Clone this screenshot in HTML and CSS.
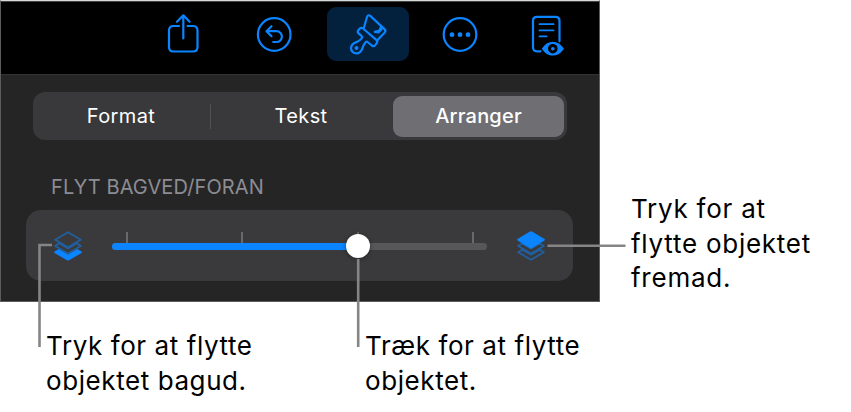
FILE: index.html
```
<!DOCTYPE html>
<html lang="da">
<head>
  <meta charset="UTF-8" />
  <meta name="viewport" content="width=device-width, initial-scale=1.0" />
  <title>Arranger</title>
  <link rel="stylesheet" href="styles.css">
</head>
<body>
  <div class="figure">
    <div class="main">
      <div class="panel">
        <div class="toolbar">
          <div class="tool">
            <svg class="icon" viewBox="143 7 82 54">
              <path d="M179 26h-5.500q-4.500 0-4.500 4.500v16.500q0 4.500 4.500 4.500h19.500q4.500 0 4.500-4.500v-16.500q0-4.500-4.500-4.500h-5.500M183.300 38.500v-23M177 21.800l6.300-6.500 6.300 6.500" />
            </svg>
          </div>
          <div class="tool">
            <svg class="icon" viewBox="235 7 82 54">
              <circle cx="274.200" cy="34.500" r="16.300" />
              <path d="M271.500 26.200l-5 5 5 5M267 31.200h9.500a5.400 5.400 0 0 1 0 10.800h-3.300" />
            </svg>
          </div>
          <div class="tool active">
            <svg class="icon" viewBox="327 7 82 54">
              <path d="M358.300 30.200l1.300-1.500q1.600-1.700 3.400-.2l13.300 11.400q1.800 1.600.4 3.300l-1.400 1.900q-1.500 1.900-3.500.4l-4.300-3.500q-1.300-.8-2.300.7-1.700 2.400-2.800 5.600c-1.100 3.200-3.300 5-6 5-3.200 0-5.500-2.300-5.300-5.300.1-3 2-4.800 5.300-5.900 2.700-.9 4-2.100 5.300-3.700q1-1.300-.3-2.500l-2.800-2.500q-1.600-1.500-.3-3.200z" />
              <path d="M363.700 28.300l3.400-11.500q1-2.600 3.200-.9l14.200 13.200q1.700 1.700.3 3.300l-7.700 8.200M381 26.800l-1.600 3.800-4.600 1.300 4 .4 2.800-3z" />
              <circle class="solid" cx="356.500" cy="48" r="2" />
            </svg>
          </div>
          <div class="tool">
            <svg class="icon" viewBox="419 7 82 54">
              <circle cx="460" cy="34.500" r="16.300" />
              <circle class="solid" cx="452" cy="34.700" r="2.400" />
              <circle class="solid" cx="460" cy="34.700" r="2.400" />
              <circle class="solid" cx="468" cy="34.700" r="2.400" />
            </svg>
          </div>
          <div class="tool">
            <svg class="icon" viewBox="511 7 82 54">
              <path d="M540.500 51.300h-3.500q-4 0-4-4v-26.500q0-4 4-4h18.500q4 0 4 4v20.500" />
              <path class="thin" d="M539.500 24.200h14M539.500 30.400h14M539.500 36.400h7" />
              <path class="solid" d="M541.800 48.700c5.800-9.200 16.200-9.200 22.200 0-6 9.200-16.400 9.200-22.200 0z" />
              <circle class="hole" cx="552.800" cy="48.700" r="4.800" />
              <circle class="solid" cx="552.800" cy="48.700" r="1.800" />
            </svg>
          </div>
        </div>

        <div class="content">
          <div class="tabs">
            <div class="tab">Format</div>
            <div class="divider"></div>
            <div class="tab tab-text">Tekst</div>
            <div class="tab selected">Arranger</div>
          </div>
          <div class="label">FLYT BAGVED/FORAN</div>
          <div class="card">
            <svg class="layers" viewBox="0 0 28 30">
              <path class="front" d="M.5 20.500L5 18l9 5.500 9-5.500 4.500 2.500q.8.700 0 1.500L15 29.200q-1 .6-2 0L.5 22q-.8-.7 0-1.500z" />
              <path class="back" d="M5.200 12.300L1.200 15l12.800 7.500L26.800 15l-4-2.700L14 17.600z" />
              <path class="back" d="M14 1.200L26.800 8.700 14 16.200 1.200 8.700z" />
            </svg>
            <div class="slider">
              <div class="ticks"><i></i><i></i><i></i><i></i></div>
              <div class="track"><div class="fill"></div></div>
              <div class="thumb"></div>
            </div>
            <svg class="layers" viewBox="0 0 28 30">
              <path class="back" d="M5.200 18.700L1.200 21.200 14 28.700l12.800-7.500-4-2.500L14 23.800z" />
              <path class="back" d="M5.200 12.500L1.200 15 14 22.500 26.800 15l-4-2.500L14 17.600z" />
              <path class="front" d="M13 .6q1-.6 2 0L27.500 8q.8.700 0 1.500L15 16.900q-1 .6-2 0L.5 9.500q-.8-.7 0-1.500z" />
            </svg>
          </div>
        </div>
      </div>
      <div class="captions">
        <p class="caption">Tryk for at flytte<br>objektet bagud.</p>
        <p class="caption">Træk for at flytte<br>objektet.</p>
      </div>
    </div>
    <p class="caption side">Tryk for at<br>flytte objektet<br>fremad.</p>

    <!-- callout lines over the panel -->
    <svg class="lines" viewBox="0 0 851 412">
      <path d="M52 245h-12.500v102M358.200 259v88M547.500 245.700h78" />
    </svg>
  </div>
</body>
</html>
```
FILE: styles.css
```
* {
  box-sizing: border-box;
}
body {
  margin: 0;
  background: #fff;
  color: #000;
  font-family: Inter, "Liberation Sans", sans-serif;
}
.figure {
  position: relative;
  display: flex;
  width: 851px;
  height: 412px;
  overflow: hidden;
}
.main {
  flex: none;
  width: 600px;
}
.panel {
  height: 302px;
  border: 1px solid #5c5c5c;
  border-top: 1px solid #d5d9d8;
  background: #252525;
}
.toolbar {
  display: flex;
  gap: 10px;
  height: 74px;
  padding: 6px 0 0 142px;
  background: #000;
  border-top: 1px solid #444;
  border-bottom: 1px solid #333;
}
.tool {
  flex: none;
  width: 82px;
  height: 54px;
  margin-top: -1px;
  border-radius: 9px;
}
.tool.active {
  background: #03203c;
}
.icon {
  display: block;
  width: 82px;
  height: 54px;
  fill: none;
  stroke: #0a84ff;
  stroke-width: 2.2;
  stroke-linecap: round;
  stroke-linejoin: round;
}
.icon .solid {
  fill: #0a84ff;
  stroke: none;
}
.icon .hole {
  fill: #000;
  stroke: none;
}
.icon .thin {
  stroke-width: 1.8;
}
.content {
  padding: 17px 25px 0;
}
.tabs {
  display: flex;
  align-items: center;
  width: 534px;
  height: 48px;
  margin-left: 7px;
  padding: 3px;
  border-radius: 12px;
  background: #39393b;
  color: #fff;
  font-size: 20px;
}
.tab {
  width: 174px;
  height: 41px;
  padding-right: 4px;
  line-height: 40px;
  text-align: center;
  letter-spacing: 0.4px;
}
.tab-text {
  width: 182px;
  padding-right: 2px;
}
.tab.selected {
  width: 171px;
  padding: 0;
  border-radius: 9px;
  background: #6f6e73;
  font-weight: 500;
  letter-spacing: 0.2px;
}
.divider {
  width: 1px;
  height: 25px;
  background: #515154;
}
.label {
  height: 24px;
  margin: 35px 0 11px 25px;
  color: #8d8c93;
  font-size: 20px;
  line-height: 24px;
  letter-spacing: 0.1px;
}
.card {
  display: flex;
  align-items: center;
  width: 547px;
  height: 71px;
  padding: 0 28px;
  border-radius: 15px;
  background: #3a3a3c;
}
.layers {
  width: 28px;
  height: 30px;
}
.layers .front {
  fill: #0a84ff;
}
.layers .back {
  fill: #3a3a3c;
  stroke: #215f9f;
  stroke-width: 1.8;
  stroke-linejoin: round;
}
.slider {
  position: relative;
  width: 375px;
  height: 27px;
  margin: 0 30px;
}
.ticks {
  display: flex;
  justify-content: space-between;
  height: 11px;
  padding: 0 13px 0 14px;
}
.ticks i {
  width: 2px;
  background: #69696b;
}
.track {
  height: 7px;
  border-radius: 4px;
  background: #575759;
}
.fill {
  width: 246px;
  height: 7px;
  border-radius: 4px 0 0 4px;
  background: #0a84ff;
}
.thumb {
  position: absolute;
  top: 1.5px;
  left: 234px;
  width: 24px;
  height: 24px;
  border-radius: 50%;
  background: #fff;
  box-shadow: 0 1px 4px rgba(0, 0, 0, 0.4);
}
.captions {
  display: flex;
  padding: 27px 0 0 46px;
}
.caption {
  flex: none;
  width: 319px;
  margin: 0;
  font-size: 26px;
  line-height: 34.5px;
  letter-spacing: 0.58px;
  white-space: nowrap;
}
.side {
  width: 220px;
  padding: 192px 0 0 31px;
  letter-spacing: 0.75px;
}
.lines {
  position: absolute;
  top: 0;
  left: 0;
  width: 851px;
  height: 412px;
  fill: none;
  stroke: #858585;
  stroke-width: 2.6;
}
```
